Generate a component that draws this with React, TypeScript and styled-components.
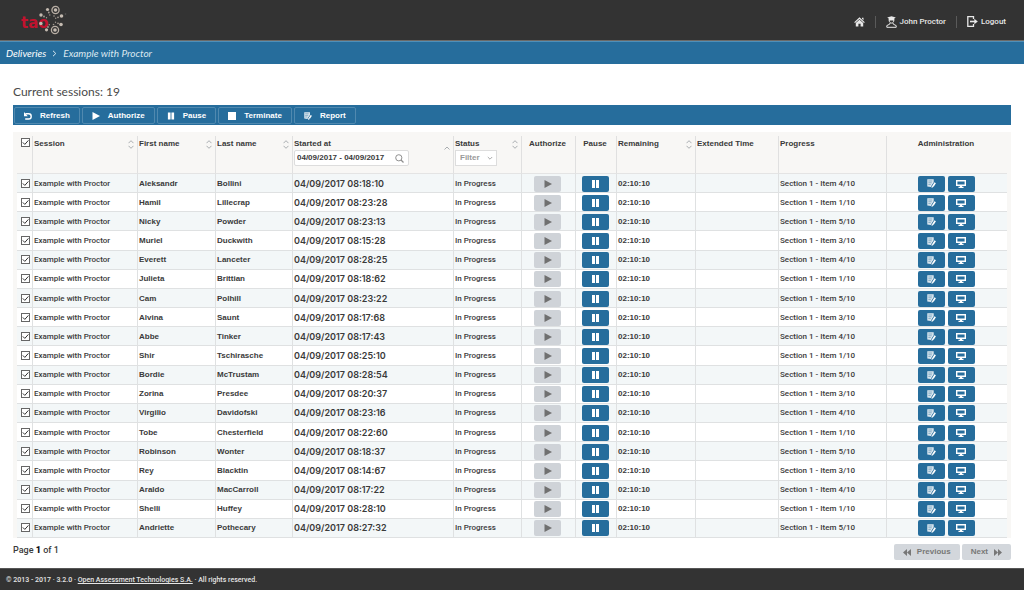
import React from "react";
import styled, { createGlobalStyle, css } from "styled-components";

const blue = "#266d9c";
const dark = "#333333";
const sans = `"Liberation Sans", Arial, sans-serif`;
const narrow = `Roboto, "Liberation Sans", sans-serif`;
const round = `Lato, "Liberation Sans", sans-serif`;

const GlobalStyle = createGlobalStyle`
  *, *::before, *::after { box-sizing: border-box; }
  body { margin: 0; background: #fff; color: #3a3a3a; font: bold 8px/12px ${sans}; }
  button, input, select { font: inherit; color: inherit; margin: 0; }
`;

const Page = styled.div`
  min-height: 100vh;
  display: flex;
  flex-direction: column;
`;

const Header = styled.header`
  height: 41px;
  padding: 0 18px 0 20px;
  display: flex;
  align-items: center;
  justify-content: space-between;
  background: ${dark};
  border-bottom: 1px solid #6b6a68;
`;

const Logo = styled.a`
  display: flex;
  svg { display: block; }
`;

const UserNav = styled.nav`
  display: flex;
  align-items: center;
  padding-top: 3px;
  font: 500 8px/12px ${narrow};
`;

const NavLink = styled.a`
  display: flex;
  align-items: center;
  gap: 3px;
  height: 12px;
  padding: 0 10px;
  color: #e8e8e8;
  text-decoration: none;
  & + & { border-left: 1px solid #5a5a5a; }
  &:last-child { padding-right: 0; }
`;

const Breadcrumb = styled.nav`
  height: 23px;
  padding: 0 6px;
  display: flex;
  align-items: center;
  gap: 6px;
  background: ${blue};
  border-top: 1px solid #4f8fb8;
  color: #dbe8f0;
  font: italic 10px/14px ${round};
  a { color: #fff; text-decoration: none; }
`;

const Main = styled.main`
  padding: 19px 13px 8px;
`;

const Title = styled.h1`
  margin: 0 0 5px;
  color: #4a4a4a;
  font: 400 12px/17px ${round};
`;

const Toolbar = styled.div`
  display: flex;
  gap: 2px;
  height: 20px;
  padding: 2px 1px 1px;
  background: ${blue};
`;

const ToolButton = styled.button`
  display: flex;
  align-items: center;
  gap: 8px;
  padding: 1px 9px 0;
  border: 1px solid #5089af;
  border-radius: 2px;
  background: ${blue};
  color: #fff;
  svg { width: 8px; height: 8px; }
`;

const TableBox = styled.div`
  margin-top: 7px;
  padding: 4px 4px 0;
  background: #f8f7f5;
`;

const Table = styled.table`
  width: 100%;
  height: 402px;
  table-layout: fixed;
  border-collapse: separate;
  border-spacing: 0;
`;

const HeadCell = styled.th<{ $center?: boolean }>`
  height: 38px;
  padding: 2px 3px 0 1px;
  vertical-align: top;
  text-align: ${(p) => (p.$center ? "center" : "left")};
  border-bottom: 1px solid #e4e4e4;
  & + & { border-left: 1px solid #e0e0e0; }
`;

const HeadLine = styled.div`
  display: flex;
  justify-content: space-between;
  align-items: center;
  height: 12px;
`;

const Row = styled.tr`
  background: #fff;
  &:nth-child(odd) { background: #f3f7f8; }
`;

type CellKind = "text" | "date" | "center";
const Cell = styled.td<{ $kind?: CellKind }>`
  height: 19px;
  padding: 1px 3px 0 1px;
  vertical-align: middle;
  white-space: nowrap;
  border-bottom: 1px solid #dfe1e2;
  & + & { border-left: 1px solid #dfe1e2; }
  ${(p) => p.$kind === "text" && css`font: 500 8px/12px ${narrow};`}
  ${(p) => p.$kind === "date" && css`font: 600 9px/12px Inter, ${sans};`}
  ${(p) => p.$kind === "center" && css`text-align: center;`}
`;

const CheckCell = styled(Cell)`
  padding: 0 0 0 1px;
`;

const CheckHead = styled(HeadCell)`
  padding: 2px 0 0 1px;
`;

const checkMark =
  "url(\"data:image/svg+xml,%3Csvg xmlns='http://www.w3.org/2000/svg' viewBox='0 0 9 9'%3E%3Cpath d='M1.8 4.4 3.8 6.4 7.4 2.4' fill='none' stroke='%23333'/%3E%3C/svg%3E\")";

const Check = styled.input`
  appearance: none;
  display: block;
  width: 9px;
  height: 9px;
  && { margin: 0 auto; }
  border: 1px solid #666;
  background: #fff;
  &:checked { background: #fff ${checkMark} center / 9px 9px; }
`;

const SearchBox = styled.div`
  display: flex;
  align-items: center;
  width: 115px;
  height: 16px;
  padding-right: 4px;
  border: 1px solid #ddd;
  border-radius: 2px;
  background: #fff;
`;

const DateInput = styled.input`
  flex: 1;
  min-width: 0;
  padding: 0 0 0 2px;
  border: 0;
  outline: 0;
  background: none;
  font: bold 8px/12px ${sans};
`;

const SelectBox = styled.div`
  display: flex;
  position: relative;
  width: 42px;
  svg { position: absolute; right: 4px; top: 6px; pointer-events: none; }
`;

const StatusSelect = styled.select`
  appearance: none;
  width: 100%;
  height: 16px;
  padding: 0 4px;
  border: 1px solid #ddd;
  border-radius: 0;
  background: #fff;
  color: #999;
`;

const RowButton = styled.button`
  display: inline-flex;
  align-items: center;
  justify-content: center;
  vertical-align: middle;
  width: 27px;
  height: 16px;
  padding: 0;
  border: 0;
  border-radius: 2px;
  background: ${blue};
  color: #fff;
  & + & { margin-left: 3px; }
  &:disabled { background: #cfd3d8; color: #707070; }
`;

const PagerRow = styled.div`
  display: flex;
  justify-content: space-between;
  padding-top: 6px;
`;

const PageInfo = styled.p`
  margin: 0;
  font: 500 9px/12px ${narrow};
  strong { font-weight: 900; color: #111; }
`;

const Pager = styled.div`
  display: flex;
  gap: 2px;
`;

const PagerButton = styled.button`
  display: flex;
  align-items: center;
  gap: 6px;
  height: 16px;
  padding: 0 9px;
  border: 0;
  border-radius: 2px;
  background: #d3d7dc;
  color: #777;
`;

const Footer = styled.footer`
  margin-top: auto;
  height: 22px;
  padding: 5px 6px 0;
  background: ${dark};
  border-top: 1px solid #555;
  color: #e6e6e6;
  font: 500 7px/12px ${narrow};
  a { color: inherit; }
`;

const TaoLogo = () => (
  <svg width="48" height="32" viewBox="0 0 48 32" role="img" aria-label="tao">
    <text x="1" y="24" fill="#c2122e" fontFamily="DejaVu Sans, sans-serif" fontSize="15">tao</text>
    <g fill="none" stroke="#b8aea4" strokeWidth="1.3">
      <circle cx="35.500" cy="6" r="3.600" />
      <circle cx="35" cy="26" r="3.600" />
    </g>
    <g fill="#c5bbb1">
      <circle cx="35.500" cy="6" r="1.800" />
      <circle cx="35" cy="26" r="1.800" />
      <circle cx="21" cy="11" r="1.700" />
      <circle cx="27.500" cy="5.500" r="1.600" />
      <circle cx="41.500" cy="12" r="1.800" />
      <circle cx="41" cy="20.500" r="1.800" />
      <circle cx="26.500" cy="25.800" r="1.600" />
      <circle cx="20.800" cy="19.500" r="1.800" />
    </g>
    <g fill="#a39a91">
      <circle cx="24" cy="12.500" r="0.900" />
      <circle cx="26.500" cy="13.800" r="0.700" />
      <circle cx="28.800" cy="8.500" r="0.900" />
      <circle cx="29.800" cy="11" r="0.700" />
      <circle cx="34" cy="12" r="0.800" />
      <circle cx="38" cy="13.300" r="0.900" />
      <circle cx="35.700" cy="14.300" r="0.700" />
      <circle cx="38" cy="19.300" r="0.900" />
      <circle cx="35.500" cy="18.300" r="0.700" />
      <circle cx="28" cy="23" r="0.900" />
      <circle cx="29.300" cy="20.700" r="0.700" />
      <circle cx="33.500" cy="20.500" r="0.800" />
    </g>
    <circle cx="45.500" cy="10" r="0.800" fill="#5c5c5c" />
  </svg>
);

const HomeIcon = () => (
  <svg width="11" height="10" viewBox="0 0 11 10" fill="currentColor" aria-hidden="true">
    <path d="M5.500 0.300 10.800 5.200 10 6 5.500 1.900 1 6 0.200 5.200Z" />
    <path d="M8 0.800h1.500v2.400L8 1.800ZM5.500 2.700 9.200 6v3.600H6.600V6.800H4.400v2.800H1.800V6Z" />
  </svg>
);

const ProctorIcon = () => (
  <svg width="11" height="12" viewBox="0 0 11 12" fill="none" stroke="currentColor" aria-hidden="true">
    <path d="M5.500 0.200 9.800 1.600 8.300 2.400v2H2.700v-2L1.200 1.600Z" fill="currentColor" stroke="none" />
    <path d="M3.300 3.500v1.300c0 1.400 1 2.300 2.200 2.300s2.200-.9 2.200-2.300V3.500M4 7 3.700 8.200.8 9.600v1.700h9.400V9.600L7.300 8.200 7 7" />
  </svg>
);

const LogoutIcon = () => (
  <svg width="11" height="11" viewBox="0 0 11 11" fill="none" stroke="currentColor" aria-hidden="true">
    <path d="M6.500 3V.700H.800v9.600h5.700V8" strokeWidth="1.300" />
    <path d="M3 5.500h5" strokeWidth="1.600" />
    <path d="M7.300 2.800 10.800 5.500 7.300 8.200Z" fill="currentColor" stroke="none" />
  </svg>
);

const RefreshIcon = () => (
  <svg viewBox="0 0 8 8" aria-hidden="true">
    <path d="M1.400 1.800h3.200a2.600 2.600 0 1 1 0 5.200H1.200" fill="none" stroke="currentColor" strokeWidth="1.400" />
    <path d="M0 0v4.200h3.800Z" fill="currentColor" />
  </svg>
);

const PlayIcon = () => (
  <svg width="8" height="8" viewBox="0 0 8 8" aria-hidden="true">
    <path d="M.500 0 8 4 .500 8Z" fill="currentColor" />
  </svg>
);

const PauseIcon = () => (
  <svg width="9" height="8" viewBox="0 0 9 8" aria-hidden="true">
    <path d="M1 0h3v8H1zM5 0h3v8H5z" fill="currentColor" />
  </svg>
);

const StopIcon = () => (
  <svg viewBox="0 0 8 8" aria-hidden="true">
    <path d="M0 0h8v8H0z" fill="currentColor" />
  </svg>
);

const ReportIcon = () => (
  <svg width="9" height="9" viewBox="0 0 9 9" aria-hidden="true" fill="none" stroke="currentColor">
    <path d="M.300.300h6.400v3L4.500 6.500 4 8 .300 7.400Z" fill="currentColor" fillOpacity=".85" stroke="none" />
    <path d="M1.300 2h4M1.300 3.800h3.500M1.300 5.600h2.500" stroke={blue} strokeWidth=".5" />
    <path d="M8.200 3.800 6 7.200" strokeWidth="1.700" />
    <path d="m4.900 6.500 1.700 1.300-2 1.100Z" fill="currentColor" stroke="none" />
  </svg>
);

const ScreenIcon = () => (
  <svg width="10" height="8" viewBox="0 0 10 8" aria-hidden="true">
    <path d="M.700.700h8.600v4.600H.700z" fill="none" stroke="currentColor" strokeWidth="1.400" />
    <path d="M4 5.800h2v1h1.500v1.200h-5V6.800H4z" fill="currentColor" />
  </svg>
);

const SortIcon = () => (
  <svg width="6" height="9" viewBox="0 0 6 9" fill="none" stroke="#a9adb0" aria-hidden="true">
    <path d="M.500 3.200 3 .700 5.500 3.200M.500 5.800 3 8.300 5.500 5.800" />
  </svg>
);

const SortedIcon = () => (
  <svg width="6" height="12" viewBox="0 0 6 12" fill="none" stroke="#a9adb0" aria-hidden="true">
    <path d="M.500 11.500 3 9 5.500 11.500" />
  </svg>
);

const SearchIcon = () => (
  <svg width="9" height="9" viewBox="0 0 9 9" fill="none" stroke="#8f8f8f" aria-hidden="true">
    <circle cx="3.800" cy="3.800" r="3.100" />
    <path d="M6 6 8.500 8.500" strokeWidth="1.300" />
  </svg>
);

const ChevronDown = () => (
  <svg width="6" height="5" viewBox="0 0 6 5" fill="none" stroke="#aaa" aria-hidden="true">
    <path d="M.800 1 3 3.200 5.200 1" />
  </svg>
);

const CrumbChevron = () => (
  <svg width="5" height="7" viewBox="0 0 5 7" fill="none" stroke="#dbe8f0" aria-hidden="true">
    <path d="M1 .800 3.800 3.500 1 6.200" />
  </svg>
);

const Rewind = () => (
  <svg width="8" height="7" viewBox="0 0 8 7" fill="currentColor" aria-hidden="true">
    <path d="M4 0v7L0 3.500ZM8 0v7L4 3.500Z" />
  </svg>
);

const Forward = () => (
  <svg width="8" height="7" viewBox="0 0 8 7" fill="currentColor" aria-hidden="true">
    <path d="M0 0v7l4-3.500ZM4 0v7l4-3.500Z" />
  </svg>
);

const tools = [
  { label: "Refresh", icon: <RefreshIcon /> },
  { label: "Authorize", icon: <PlayIcon /> },
  { label: "Pause", icon: <PauseIcon /> },
  { label: "Terminate", icon: <StopIcon /> },
  { label: "Report", icon: <ReportIcon /> },
];

const columnWidths = [15, 105, 78, 77, 161, 68, 54, 41, 79, 83, 108, 121];

const sessions: [string, string, string, number][] = [
  ["Aleksandr", "Bollini", "08:18:10", 4],
  ["Hamil", "Lillecrap", "08:23:28", 1],
  ["Nicky", "Powder", "08:23:13", 5],
  ["Muriel", "Duckwith", "08:15:28", 3],
  ["Everett", "Lanceter", "08:28:25", 4],
  ["Julieta", "Brittian", "08:18:62", 1],
  ["Cam", "Polhill", "08:23:22", 5],
  ["Alvina", "Saunt", "08:17:68", 3],
  ["Abbe", "Tinker", "08:17:43", 4],
  ["Shir", "Tschirasche", "08:25:10", 1],
  ["Bordie", "McTrustam", "08:28:54", 5],
  ["Zorina", "Presdee", "08:20:37", 3],
  ["Virgilio", "Davidofski", "08:23:16", 4],
  ["Tobe", "Chesterfield", "08:22:60", 1],
  ["Robinson", "Wonter", "08:18:37", 5],
  ["Rey", "Blacktin", "08:14:67", 3],
  ["Araldo", "MacCarroll", "08:17:22", 4],
  ["Shelli", "Huffey", "08:28:10", 1],
  ["Andriette", "Pothecary", "08:27:32", 5],
];

export default function App() {
  return (
    <Page>
      <GlobalStyle />
      <Header>
        <Logo href="#"><TaoLogo /></Logo>
        <UserNav>
          <NavLink href="#" aria-label="Home"><HomeIcon /></NavLink>
          <NavLink href="#"><ProctorIcon />John Proctor</NavLink>
          <NavLink href="#"><LogoutIcon />Logout</NavLink>
        </UserNav>
      </Header>
      <Breadcrumb>
        <a href="#">Deliveries</a>
        <CrumbChevron />
        <span>Example with Proctor</span>
      </Breadcrumb>
      <Main>
        <Title>Current sessions: 19</Title>
        <Toolbar>
          {tools.map((t) => (
            <ToolButton key={t.label} type="button">{t.icon}{t.label}</ToolButton>
          ))}
        </Toolbar>
        <TableBox>
          <Table>
            <colgroup>
              {columnWidths.map((w, i) => <col key={i} width={w} />)}
            </colgroup>
            <thead>
              <tr>
                <CheckHead><Check type="checkbox" defaultChecked aria-label="Select all" /></CheckHead>
                <HeadCell><HeadLine>Session<SortIcon /></HeadLine></HeadCell>
                <HeadCell><HeadLine>First name<SortIcon /></HeadLine></HeadCell>
                <HeadCell><HeadLine>Last name<SortIcon /></HeadLine></HeadCell>
                <HeadCell>
                  <HeadLine>Started at<SortedIcon /></HeadLine>
                  <SearchBox>
                    <DateInput aria-label="Started at" defaultValue="04/09/2017 - 04/09/2017" />
                    <SearchIcon />
                  </SearchBox>
                </HeadCell>
                <HeadCell>
                  <HeadLine>Status<SortIcon /></HeadLine>
                  <SelectBox>
                    <StatusSelect aria-label="Status"><option>Filter</option></StatusSelect>
                    <ChevronDown />
                  </SelectBox>
                </HeadCell>
                <HeadCell $center>Authorize</HeadCell>
                <HeadCell $center>Pause</HeadCell>
                <HeadCell><HeadLine>Remaining<SortIcon /></HeadLine></HeadCell>
                <HeadCell>Extended Time</HeadCell>
                <HeadCell>Progress</HeadCell>
                <HeadCell $center>Administration</HeadCell>
              </tr>
            </thead>
            <tbody>
              {sessions.map(([first, last, time, item]) => (
                <Row key={first}>
                  <CheckCell><Check type="checkbox" defaultChecked aria-label={`Select ${first} ${last}`} /></CheckCell>
                  <Cell $kind="text">Example with Proctor</Cell>
                  <Cell>{first}</Cell>
                  <Cell>{last}</Cell>
                  <Cell $kind="date">04/09/2017 {time}</Cell>
                  <Cell $kind="text">In Progress</Cell>
                  <Cell $kind="center"><RowButton type="button" disabled aria-label="Authorize"><PlayIcon /></RowButton></Cell>
                  <Cell $kind="center"><RowButton type="button" aria-label="Pause"><PauseIcon /></RowButton></Cell>
                  <Cell>02:10:10</Cell>
                  <Cell />
                  <Cell $kind="text">Section 1 - Item {item}/10</Cell>
                  <Cell $kind="center">
                    <RowButton type="button" aria-label="Report"><ReportIcon /></RowButton>
                    <RowButton type="button" aria-label="Monitor"><ScreenIcon /></RowButton>
                  </Cell>
                </Row>
              ))}
            </tbody>
          </Table>
        </TableBox>
        <PagerRow>
          <PageInfo>Page <strong>1</strong> of 1</PageInfo>
          <Pager>
            <PagerButton type="button" disabled><Rewind />Previous</PagerButton>
            <PagerButton type="button" disabled>Next<Forward /></PagerButton>
          </Pager>
        </PagerRow>
      </Main>
      <Footer>
        © 2013 - 2017 · 3.2.0 · <a href="#">Open Assessment Technologies S.A.</a> · All rights reserved.
      </Footer>
    </Page>
  );
}
